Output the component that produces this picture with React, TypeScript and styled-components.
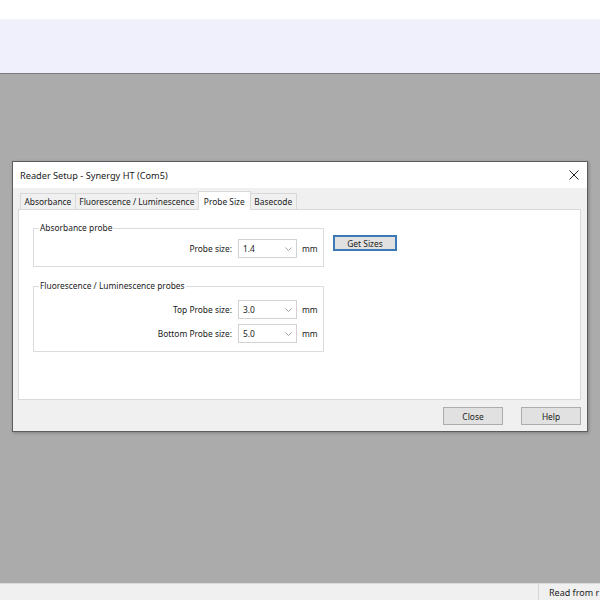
import React from "react";
import styled, { createGlobalStyle } from "styled-components";

const GlobalStyle = createGlobalStyle`
  html, body {
    margin: 0;
    padding: 0;
    background: #ababab;
  }
  body {
    font-family: "Noto Sans", "Liberation Sans", sans-serif;
    font-size: 8.4px;
    color: #1a1a1a;
  }
`;

const Page = styled.div`
  display: flex;
  flex-direction: column;
  width: 600px;
  height: 600px;
  overflow: hidden;
`;

const TopStrip = styled.div`
  height: 19px;
  background: #ffffff;
  border-bottom: 1px solid #f3f3f6;
`;

const Ribbon = styled.div`
  height: 53px;
  background: #eff0fb;
  border-bottom: 1px solid #7c7c80;
`;

const Workspace = styled.div`
  flex: 1;
  background: #ababab;
  padding: 87px 0 0 12px;
`;

const StatusBar = styled.div`
  height: 16px;
  display: flex;
  background: #f0f0f0;
  border-top: 1px solid #dcdcdc;
`;

const StatusCell = styled.div<{ $width?: number }>`
  ${(p) => (p.$width ? `width: ${p.$width}px;` : "flex: 1;")}
  box-sizing: border-box;
  display: flex;
  align-items: center;
  padding-left: 10px;
  border-left: ${(p) => (p.$width ? "none" : "1px solid #d6d6d6")};
  white-space: nowrap;
  overflow: hidden;
  font-size: 9px;
`;

const Dialog = styled.div`
  width: 574px;
  height: 269px;
  border: 1px solid #5d5d5d;
  background: #f0f0f0;
  display: flex;
  flex-direction: column;
  box-shadow: 1px 1px 3px rgba(0, 0, 0, 0.25);
`;

const TitleBar = styled.div`
  height: 26px;
  background: #ffffff;
  display: flex;
  align-items: center;
  justify-content: space-between;
  padding: 0 8px 0 7px;
  font-size: 9.2px;
`;

const CloseX = styled.svg`
  width: 10px;
  height: 10px;
`;

const Body = styled.div`
  flex: 1;
  display: flex;
  flex-direction: column;
  padding: 5px 6px 0 5px;
`;

const TabStrip = styled.div`
  display: flex;
  align-items: flex-end;
  height: 16px;
  padding-left: 3px;
`;

const Tab = styled.div<{ $active?: boolean }>`
  height: ${(p) => (p.$active ? 18 : 15)}px;
  padding: ${(p) => (p.$active ? "0 5px" : "0 3.5px")};
  display: flex;
  align-items: center;
  background: ${(p) => (p.$active ? "#ffffff" : "#f0f0f0")};
  border: 1px solid #d9d9d9;
  border-bottom: none;
  margin-left: -1px;
  margin-bottom: ${(p) => (p.$active ? -1 : 0)}px;
  position: relative;
  z-index: ${(p) => (p.$active ? 2 : 1)};
  white-space: nowrap;
`;

const Panel = styled.div`
  height: 191px;
  background: #ffffff;
  border: 1px solid #d9d9d9;
  padding: 12px 0 0 14px;
  box-sizing: border-box;
  display: flex;
  flex-direction: column;
  gap: 13px;
`;

const GroupRow = styled.div`
  display: flex;
  align-items: flex-start;
  gap: 9px;
`;

const Group = styled.fieldset<{ $top: number }>`
  width: 291px;
  box-sizing: border-box;
  margin: 0;
  border: 1px solid #dcdcdc;
  padding: ${(p) => p.$top}px 8px 8px 6px;
  display: flex;
  flex-direction: column;
  gap: 5px;
`;

const Legend = styled.legend`
  padding: 0 1px;
  margin-left: -1px;
  line-height: 12px;
`;

const FieldRow = styled.div`
  display: flex;
  align-items: center;
  justify-content: flex-end;
`;

const FieldLabel = styled.span`
  margin-right: 6px;
`;

const Combo = styled.div`
  width: 59px;
  height: 19px;
  box-sizing: border-box;
  border: 1px solid #d2d2d2;
  background: #ffffff;
  display: flex;
  align-items: center;
  justify-content: space-between;
  padding: 0 4px 0 4px;
`;

const Chevron = styled.svg`
  width: 7px;
  height: 4px;
`;

const Unit = styled.span`
  margin-left: 5px;
  width: 13px;
`;

const Button = styled.div<{ $focused?: boolean; $width: number }>`
  width: ${(p) => p.$width}px;
  height: ${(p) => (p.$focused ? 16 : 18)}px;
  box-sizing: border-box;
  display: flex;
  align-items: center;
  justify-content: center;
  background: #e1e1e1;
  border: ${(p) => (p.$focused ? "2px solid #3b7ab5" : "1px solid #adadad")};
`;

const GetSizes = styled(Button)`
  margin-top: 13px;
`;

const Footer = styled.div`
  display: flex;
  justify-content: flex-end;
  gap: 18px;
  padding-top: 7px;
`;

const combo = (value: string) => (
  <Combo>
    <span>{value}</span>
    <Chevron viewBox="0 0 7 4">
      <polyline points="0.5,0.5 3.5,3.5 6.5,0.5" fill="none" stroke="#9a9a9a" strokeWidth="0.9" />
    </Chevron>
  </Combo>
);

export default function App() {
  return (
    <Page>
      <GlobalStyle />
      <TopStrip />
      <Ribbon />
      <Workspace>
        <Dialog>
          <TitleBar>
            <span>Reader Setup - Synergy HT (Com5)</span>
            <CloseX viewBox="0 0 10 10">
              <path d="M0.5 0.5 L9.5 9.5 M9.5 0.5 L0.5 9.5" stroke="#222" strokeWidth="1" />
            </CloseX>
          </TitleBar>
          <Body>
            <TabStrip>
              <Tab>Absorbance</Tab>
              <Tab>Fluorescence / Luminescence</Tab>
              <Tab $active>Probe Size</Tab>
              <Tab>Basecode</Tab>
            </TabStrip>
            <Panel>
              <GroupRow>
                <Group $top={5}>
                  <Legend>Absorbance probe</Legend>
                  <FieldRow>
                    <FieldLabel>Probe size:</FieldLabel>
                    {combo("1.4")}
                    <Unit>mm</Unit>
                  </FieldRow>
                </Group>
                <GetSizes $focused $width={64}>Get Sizes</GetSizes>
              </GroupRow>
              <Group $top={8}>
                <Legend>Fluorescence / Luminescence probes</Legend>
                <FieldRow>
                  <FieldLabel>Top Probe size:</FieldLabel>
                  {combo("3.0")}
                  <Unit>mm</Unit>
                </FieldRow>
                <FieldRow>
                  <FieldLabel>Bottom Probe size:</FieldLabel>
                  {combo("5.0")}
                  <Unit>mm</Unit>
                </FieldRow>
              </Group>
            </Panel>
            <Footer>
              <Button $width={60}>Close</Button>
              <Button $width={60}>Help</Button>
            </Footer>
          </Body>
        </Dialog>
      </Workspace>
      <StatusBar>
        <StatusCell $width={538} />
        <StatusCell>Read from r</StatusCell>
      </StatusBar>
    </Page>
  );
}
